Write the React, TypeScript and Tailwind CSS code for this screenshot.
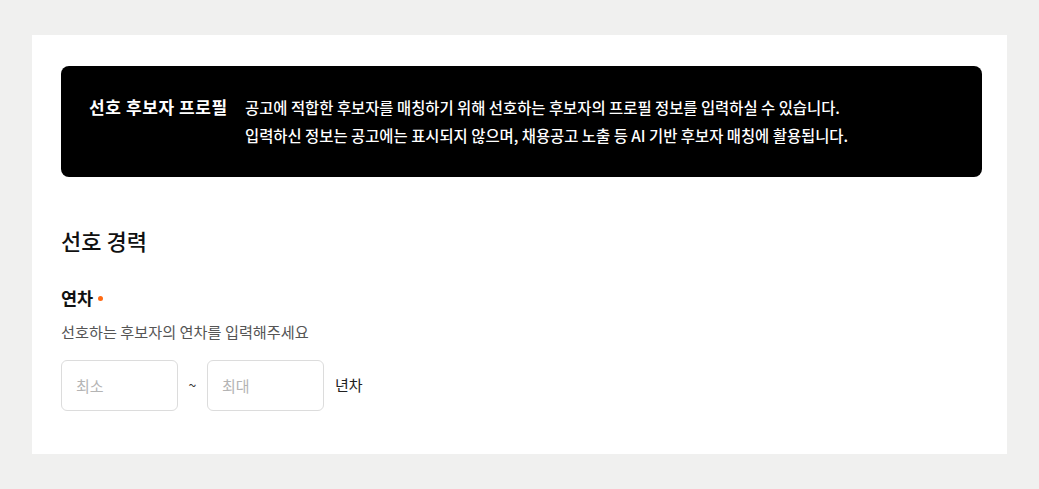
import React from "react"

const font = { fontFamily: '"Noto Sans CJK KR", "Noto Sans", sans-serif' }

const RangeInput = ({ placeholder }: { placeholder: string }) => (
  <input
    placeholder={placeholder}
    className="w-[117px] h-[51px] rounded-[6px] border border-[#dcdcdc] px-[14px] text-[15px] text-[#222] placeholder:text-[#b4b4b4] outline-none"
  />
)

export default function App() {
  return (
    <div className="min-h-[489px] bg-[#f0f0ef] pt-[35px] pl-[32px]" style={font}>
      <div className="w-[975px] bg-white pt-[31px] pb-[43px] pl-[29px] pr-[25px]">
        {/* banner */}
        <div className="flex bg-black rounded-[8px] pt-[27px] pb-[28px] pl-[28px]">
          <h2 className="text-white text-[17px] tracking-[0.6px] font-bold leading-[28px] w-[156px] shrink-0 whitespace-nowrap">
            선호 후보자 프로필
          </h2>
          <div className="text-white text-[15.4px] font-medium leading-[28px]">
            <p>공고에 적합한 후보자를 매칭하기 위해 선호하는 후보자의 프로필 정보를 입력하실 수 있습니다.</p>
            <p>입력하신 정보는 공고에는 표시되지 않으며, 채용공고 노출 등 AI 기반 후보자 매칭에 활용됩니다.</p>
          </div>
        </div>

        <h3 className="mt-[49px] text-[22px] font-medium leading-[28px] text-[#111]">선호 경력</h3>

        <div className="mt-[32px] flex items-center gap-[5px]">
          <span className="text-[17.5px] font-bold leading-[24px] text-[#111]">연차</span>
          <span className="w-[5px] h-[5px] rounded-full bg-[#ff6a13]" />
        </div>
        <p className="mt-[11px] text-[15.2px] leading-[20px] text-[#555]">선호하는 후보자의 연차를 입력해주세요</p>

        <div className="mt-[19px] flex items-center">
          <RangeInput placeholder="최소" />
          <span className="w-[29px] text-center text-[14px] text-[#333]">~</span>
          <RangeInput placeholder="최대" />
          <span className="ml-[11px] text-[15px] text-[#222]">년차</span>
        </div>
      </div>
    </div>
  )
}
